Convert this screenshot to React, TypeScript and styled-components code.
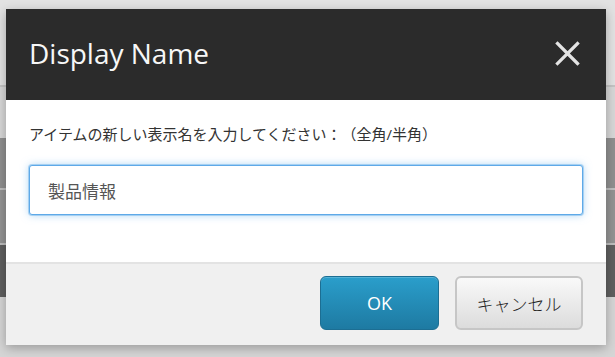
import React from 'react';
import styled, { createGlobalStyle } from 'styled-components';

const GlobalStyle = createGlobalStyle`
  html, body {
    margin: 0;
    padding: 0;
  }
  body {
    font-family: 'Open Sans', 'Noto Sans CJK JP', sans-serif;
  }
  * {
    box-sizing: border-box;
  }
`;

// background page behind the dialog, drawn as horizontal bands
const Page = styled.div`
  position: relative;
  width: 615px;
  height: 357px;
  overflow: hidden;
  display: flex;
  flex-direction: column;
`;

const Band = styled.div<{ $h: number; $color: string }>`
  height: ${(p) => p.$h}px;
  flex-shrink: 0;
  background: ${(p) => p.$color};
`;

const bands = [
  { h: 85, color: '#e2e2e2' },
  { h: 2, color: '#c4c4c4' },
  { h: 51, color: '#d7d7d7' },
  { h: 50, color: '#8f8f8f' },
  { h: 2, color: '#bfbfbf' },
  { h: 53, color: '#939393' },
  { h: 2, color: '#bdbdbd' },
  { h: 52, color: '#5f5f5f' },
  { h: 60, color: '#d5d5d5' },
];

const Dialog = styled.div`
  position: absolute;
  top: 9px;
  left: 6px;
  width: 600px;
  background: #fff;
  box-shadow: 0 3px 10px rgba(0, 0, 0, 0.28);
  display: flex;
  flex-direction: column;
`;

const Header = styled.div`
  height: 91px;
  background: #2b2b2b;
  display: flex;
  align-items: center;
  justify-content: space-between;
  padding: 0 26px 0 23px;

  > .title {
    font-family: 'Open Sans', sans-serif;
    font-size: 28px;
    color: #f7f7f7;
    margin-top: -4px;
  }
`;

const CloseButton = styled.button`
  width: 25px;
  height: 25px;
  padding: 0;
  border: none;
  background: transparent;
  display: flex;
  cursor: pointer;
  margin-top: -2px;
`;

const Body = styled.div`
  padding: 24px 23px 47px;
  display: flex;
  flex-direction: column;

  > .label {
    font-family: 'Open Sans', 'Noto Sans CJK JP', sans-serif;
    font-size: 15px;
    line-height: 20px;
    color: #333;
    margin-bottom: 21px;
    text-spacing-trim: space-all;
  }
`;

const NameInput = styled.input`
  width: 100%;
  height: 50px;
  padding: 0 18px;
  border: 1px solid #5ea9e8;
  border-radius: 3px;
  outline: none;
  box-shadow: 0 0 0 1px rgba(102, 175, 233, 0.45), 0 0 9px rgba(102, 175, 233, 0.55);
  font-family: 'Open Sans', 'Noto Sans CJK JP', sans-serif;
  font-size: 17px;
  color: #555;
  background: #fff;
`;

const Footer = styled.div`
  background: #f0f0f0;
  border-top: 2px solid #e3e3e3;
  padding: 12px 23px 15px;
  display: flex;
  justify-content: flex-end;
  gap: 16px;
`;

const Button = styled.button<{ $primary?: boolean }>`
  height: 54px;
  width: ${(p) => (p.$primary ? 119 : 128)}px;
  border-radius: 6px;
  cursor: pointer;
  font-family: 'Open Sans', 'Noto Sans CJK JP', sans-serif;
  font-size: ${(p) => (p.$primary ? 18 : 17)}px;
  display: flex;
  align-items: center;
  justify-content: center;
  padding: 0;
  ${(p) =>
    p.$primary
      ? `
    color: #fff;
    background: linear-gradient(#2a9ecb, #1e7aa2);
    border: 1px solid #1c6e93;
    box-shadow: inset 0 1px 0 rgba(255, 255, 255, 0.2);
  `
      : `
    color: #222;
    font-weight: 300;
    background: linear-gradient(#f9f9f9, #dcdcdc);
    border: 2px solid #c6c6c6;
  `}
`;

const App = () => (
  <>
    <GlobalStyle />
    <Page>
      {bands.map((b, i) => (
        <Band key={i} $h={b.h} $color={b.color} />
      ))}
      <Dialog>
        <Header>
          <span className="title">Display Name</span>
          <CloseButton aria-label="close">
            <svg width="25" height="25" viewBox="0 0 25 25">
              <path
                d="M2.5 2.5 L22.5 22.5 M22.5 2.5 L2.5 22.5"
                stroke="#e4e4e4"
                strokeWidth="3.2"
                strokeLinecap="square"
              />
            </svg>
          </CloseButton>
        </Header>
        <Body>
          <span className="label">アイテムの新しい表示名を入力してください：（全角/半角）</span>
          <NameInput defaultValue="製品情報" />
        </Body>
        <Footer>
          <Button $primary>OK</Button>
          <Button>キャンセル</Button>
        </Footer>
      </Dialog>
    </Page>
  </>
);

export default App;
